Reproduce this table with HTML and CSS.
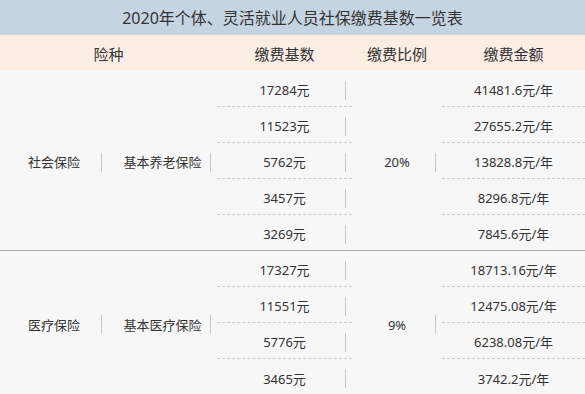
FILE: index.html
```html
<!DOCTYPE html>
<html lang="zh-CN">
<head>
<meta charset="utf-8">
<title>2020年个体、灵活就业人员社保缴费基数一览表</title>
<link rel="stylesheet" href="styles.css">
</head>
<body>
<div class="table">
  <div class="title">2020年个体、灵活就业人员社保缴费基数一览表</div>
  <div class="head">
    <div class="hcell">险种</div>
    <div class="hcell">缴费基数</div>
    <div class="hcell">缴费比例</div>
    <div class="hcell">缴费金额</div>
  </div>
  <div class="group g1">
    <div class="cell merged"><span class="txt">社会保险</span><span class="bar"></span></div>
    <div class="cell merged"><span class="txt">基本养老保险</span><span class="bar"></span></div>
    <div class="cell base"><span class="txt">17284元</span><span class="bar"></span></div>
    <div class="cell merged"><span class="txt">20%</span><span class="bar"></span></div>
    <div class="cell amt"><span class="txt">41481.6元/年</span></div>
    <div class="cell base"><span class="txt">11523元</span><span class="bar"></span></div>
    <div class="cell amt"><span class="txt">27655.2元/年</span></div>
    <div class="cell base"><span class="txt">5762元</span><span class="bar"></span></div>
    <div class="cell amt"><span class="txt">13828.8元/年</span></div>
    <div class="cell base"><span class="txt">3457元</span><span class="bar"></span></div>
    <div class="cell amt"><span class="txt">8296.8元/年</span></div>
    <div class="cell base last"><span class="txt">3269元</span><span class="bar"></span></div>
    <div class="cell amt last"><span class="txt">7845.6元/年</span></div>
  </div>
  <div class="group g2">
    <div class="cell merged"><span class="txt">医疗保险</span><span class="bar"></span></div>
    <div class="cell merged"><span class="txt">基本医疗保险</span><span class="bar"></span></div>
    <div class="cell base"><span class="txt">17327元</span><span class="bar"></span></div>
    <div class="cell merged"><span class="txt">9%</span><span class="bar"></span></div>
    <div class="cell amt"><span class="txt">18713.16元/年</span></div>
    <div class="cell base"><span class="txt">11551元</span><span class="bar"></span></div>
    <div class="cell amt"><span class="txt">12475.08元/年</span></div>
    <div class="cell base"><span class="txt">5776元</span><span class="bar"></span></div>
    <div class="cell amt"><span class="txt">6238.08元/年</span></div>
    <div class="cell base last"><span class="txt">3465元</span><span class="bar"></span></div>
    <div class="cell amt last"><span class="txt">3742.2元/年</span></div>
  </div>
</div>
</body>
</html>
```
FILE: styles.css
```css
* { box-sizing: border-box; }
html, body {
  margin: 0;
  padding: 0;
  background: #f7f7f7;
}
body {
  font-family: "Noto Sans", "Noto Sans CJK SC", sans-serif;
  color: #333;
}
.table {
  width: 585px;
  background: #f7f7f7;
}
.title {
  height: 35px;
  background: #c6d4e1;
  display: flex;
  align-items: center;
  justify-content: center;
  font-size: 16px;
  line-height: 20px;
  color: #333;
}
.head {
  height: 36px;
  background: #fcede5;
  display: grid;
  grid-template-columns: 217px 135px 90px 143px;
  align-items: center;
}
.hcell {
  text-align: center;
  font-size: 15px;
  line-height: 20px;
  padding-top: 1px;
}
.group {
  display: grid;
  grid-template-columns: 108px 109px 135px 90px 143px;
}
.g1 {
  grid-template-rows: repeat(4, 36px) 35px;
  border-bottom: 1px solid #aaaaaa;
}
.g2 {
  grid-template-rows: repeat(4, 36px);
}
.cell {
  display: grid;
  place-items: center;
  padding-top: 3px;
  font-size: 13px;
  line-height: 18px;
}
.cell > .txt,
.cell > .bar {
  grid-area: 1 / 1;
}
.bar {
  justify-self: end;
  width: 1px;
  height: 19px;
  background: #c9c9c9;
  margin-right: 6px;
}
.merged {
  grid-row: span 5;
}
.g2 .merged {
  grid-row: span 4;
}
.base,
.amt {
  border-bottom: 1px dashed #cccccc;
}
.base.last,
.amt.last {
  border-bottom: none;
}
```
